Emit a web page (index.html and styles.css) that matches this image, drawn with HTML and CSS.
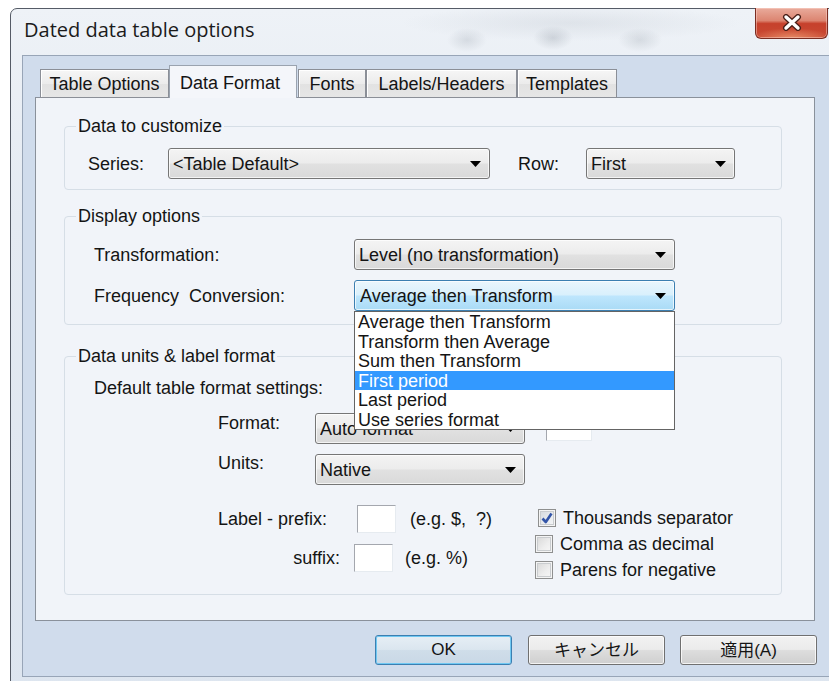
FILE: index.html
```html
<!DOCTYPE html>
<html lang="en">
<head>
<meta charset="utf-8">
<title>Dated data table options</title>
<link rel="stylesheet" href="styles.css">
</head>
<body>
<div class="window">
  <div class="titlebar">
    <span class="title">Dated data table options</span>
    <button class="close" aria-label="Close">
      <svg width="20" height="17" viewBox="0 0 20 17">
        <path d="M4 3 L16 14 M16 3 L4 14" stroke="#4a2019" stroke-width="6" stroke-linecap="round" fill="none"/>
        <path d="M4 3 L16 14 M16 3 L4 14" stroke="#ffffff" stroke-width="3.4" stroke-linecap="round" fill="none"/>
      </svg>
    </button>
  </div>

  <div class="client">
    <div class="tabs">
      <div class="tab tab-options">Table Options</div>
      <div class="tab tab-format active">Data Format</div>
      <div class="tab tab-fonts">Fonts</div>
      <div class="tab tab-labels">Labels/Headers</div>
      <div class="tab tab-templates">Templates</div>
    </div>

    <div class="panel">
      <fieldset class="group group-data">
        <legend>Data to customize</legend>
        <div class="line">
          <span class="lbl lbl-series">Series:</span>
          <div class="select sel-series"><span class="val">&lt;Table Default&gt;</span><svg class="arrow" width="11" height="6" viewBox="0 0 11 6"><path d="M0 0 H11 L5.5 6 Z"/></svg></div>
          <span class="lbl lbl-row">Row:</span>
          <div class="select sel-row"><span class="val">First</span><svg class="arrow" width="11" height="6" viewBox="0 0 11 6"><path d="M0 0 H11 L5.5 6 Z"/></svg></div>
        </div>
      </fieldset>

      <fieldset class="group group-display">
        <legend>Display options</legend>
        <div class="line">
          <span class="lbl lbl-wide">Transformation:</span>
          <div class="select sel-wide"><span class="val">Level (no transformation)</span><svg class="arrow" width="11" height="6" viewBox="0 0 11 6"><path d="M0 0 H11 L5.5 6 Z"/></svg></div>
        </div>
        <div class="line line-gap">
          <span class="lbl lbl-wide">Frequency&nbsp; Conversion:</span>
          <div class="combo">
            <div class="select sel-wide focused"><span class="val">Average then Transform</span><svg class="arrow" width="11" height="6" viewBox="0 0 11 6"><path d="M0 0 H11 L5.5 6 Z"/></svg></div>
            <ul class="list">
              <li>Average then Transform</li>
              <li>Transform then Average</li>
              <li>Sum then Transform</li>
              <li class="hl">First period</li>
              <li>Last period</li>
              <li>Use series format</li>
            </ul>
          </div>
        </div>
      </fieldset>

      <fieldset class="group group-units">
        <legend>Data units &amp; label format</legend>
        <div class="heading">Default table format settings:</div>
        <div class="line line-format">
          <span class="lbl lbl-fmt">Format:</span>
          <div class="select sel-fmt"><span class="val">Auto format</span><svg class="arrow" width="11" height="6" viewBox="0 0 11 6"><path d="M0 0 H11 L5.5 6 Z"/></svg></div>
          <div class="textbox tb-decimals"></div>
        </div>
        <div class="line line-gap line-units">
          <span class="lbl lbl-fmt">Units:</span>
          <div class="select sel-fmt"><span class="val">Native</span><svg class="arrow" width="11" height="6" viewBox="0 0 11 6"><path d="M0 0 H11 L5.5 6 Z"/></svg></div>
        </div>

        <div class="lower">
          <div class="affixes">
            <div class="affix">
              <span class="lbl lbl-prefix">Label - prefix:</span>
              <div class="textbox tb-prefix"></div>
              <span class="hint hint-prefix">(e.g. $,&nbsp; ?)</span>
            </div>
            <div class="affix affix-suffix">
              <span class="lbl lbl-suffix">suffix:</span>
              <div class="textbox tb-suffix"></div>
              <span class="hint hint-suffix">(e.g. %)</span>
            </div>
          </div>
          <div class="checks">
            <div class="check check-first">
              <span class="cb checked"><svg width="14" height="14" viewBox="0 0 14 14"><path d="M2.5 7.5 L5.8 11 L11.5 2.5" stroke="#3355a8" stroke-width="2.6" fill="none" stroke-linejoin="round"/></svg></span>
              <span class="ctext">Thousands separator</span>
            </div>
            <div class="check">
              <span class="cb"></span>
              <span class="ctext">Comma as decimal</span>
            </div>
            <div class="check">
              <span class="cb"></span>
              <span class="ctext">Parens for negative</span>
            </div>
          </div>
        </div>
      </fieldset>
    </div>

    <div class="buttons">
      <button class="btn default">OK</button>
      <button class="btn cjk">キャンセル</button>
      <button class="btn cjk">適用(A)</button>
    </div>
  </div>
</div>
</body>
</html>
```

FILE: styles.css
```css
* {
  box-sizing: border-box;
}

html,
body {
  margin: 0;
  padding: 0;
}

body {
  width: 829px;
  height: 681px;
  overflow: hidden;
  background: #ffffff;
  font-family: "Liberation Sans", Arial, "Noto Sans CJK JP", sans-serif;
  font-size: 18px;
  line-height: 20px;
  color: #141414;
}

/* ---------- window frame ---------- */
.window {
  margin: 8px 0 0 10px;
  width: 840px;
  height: 700px;
  padding: 0 11px;
  border: 1px solid #555b66;
  border-radius: 7px 7px 0 0;
  background:
    radial-gradient(ellipse 20px 12px at 456px 31px, rgba(130, 140, 152, 0.22), transparent),
    radial-gradient(ellipse 20px 12px at 542px 29px, rgba(120, 130, 142, 0.26), transparent),
    radial-gradient(ellipse 22px 12px at 629px 31px, rgba(130, 140, 150, 0.22), transparent),
    radial-gradient(ellipse 170px 18px at 560px 14px, rgba(170, 178, 188, 0.22), transparent),
    linear-gradient(180deg, #eef2f7 0%, #e4eaf2 30%, #dde5ef 100%);
  display: flex;
  flex-direction: column;
}

.titlebar {
  height: 46px;
  display: flex;
  align-items: flex-start;
}

.title {
  margin: 7px 0 0 2px;
  font-family: "Open Sans", "Liberation Sans", sans-serif;
  font-size: 20px;
  line-height: 28px;
  color: #1b1b1b;
}

.close {
  margin: -1px 10px 0 auto;
  width: 73px;
  height: 31px;
  padding: 0;
  border: 1px solid #7a2d22;
  border-top: none;
  border-radius: 0 0 6px 6px;
  background:
    radial-gradient(ellipse 40px 10px at 50% 100%, rgba(255, 190, 140, 0.55), transparent),
    linear-gradient(180deg, #e9ab9c 0%, #dc8571 42%, #c6412c 52%, #c94a33 100%);
  box-shadow: inset 0 0 0 1px rgba(255, 220, 210, 0.45);
  display: flex;
  align-items: center;
  justify-content: center;
}

.close svg {
  margin-top: -1px;
}

/* ---------- client area ---------- */
.client {
  border: 1px solid #98a5b7;
  background: #d0dcec;
  padding: 9px 0 11px 12px;
}

.tabs {
  display: flex;
  align-items: flex-end;
  height: 33px;
  padding-left: 5px;
  margin-bottom: -1px;
  position: relative;
  z-index: 1;
}

.tab {
  height: 29px;
  border: 1px solid #8b8f97;
  background: linear-gradient(180deg, #f6f6f6 0%, #ececec 50%, #e2e2e2 51%, #e6e6e6 100%);
  box-shadow: inset 1px 1px 0 #ffffff;
  display: flex;
  align-items: center;
  justify-content: center;
  white-space: nowrap;
}

.tab-options { width: 129px; }
.tab-format { width: 128px; }
.tab-fonts { width: 68px; margin-left: 1px; }
.tab-labels { width: 151px; }
.tab-templates { width: 100px; }

.tab.active {
  height: 33px;
  border-color: #9aa3af;
  border-bottom: none;
  background: #f4f6fa;
  box-shadow: none;
  justify-content: flex-start;
  padding-left: 10px;
  padding-top: 1px;
}

.panel {
  width: 780px;
  border: 1px solid #8a919b;
  background: #f1f4f9;
  padding: 18px 32px 25px 28px;
}

/* ---------- group boxes ---------- */
.group {
  margin: 0;
  min-width: 0;
  padding: 0;
  border: 1px solid #d6dee6;
  border-radius: 4px;
}

.group legend {
  padding: 0 2px;
  line-height: 20px;
}

.group-data {
  padding: 12px 0 10px 23px;
}

.group-data legend {
  margin-left: -12px;
}

.group-display {
  margin-top: 16px;
  padding: 13px 0 13px 29px;
}

.group-units {
  margin-top: 21px;
  padding: 12px 0 11px 29px;
}

.group-display legend,
.group-units legend {
  margin-left: -18px;
}

.line {
  display: flex;
  align-items: center;
}

.line-gap {
  margin-top: 10px;
}

.lbl {
  white-space: nowrap;
}

.lbl-series { width: 80px; }
.lbl-row { width: 68px; margin-left: 28px; }
.lbl-wide { width: 260px; }

/* ---------- drop-down boxes ---------- */
.select {
  height: 31px;
  display: flex;
  align-items: center;
  padding: 0 8px 0 4px;
  border: 1px solid #767676;
  border-radius: 3px;
  background: linear-gradient(180deg, #f4f4f4 0%, #ececec 48%, #e1e1e1 52%, #d9d9d9 100%);
  box-shadow: inset 0 0 0 1px rgba(255, 255, 255, 0.7);
  white-space: nowrap;
}

.select .val {
  flex: 1;
  overflow: hidden;
}

.select .arrow {
  flex: none;
  fill: #000000;
}

.sel-series { width: 322px; }
.sel-row { width: 149px; }
.sel-wide { width: 321px; }
.sel-fmt { width: 210px; }

.select.focused {
  border-color: #3c7fb1;
  background: linear-gradient(180deg, #eaf6fd 0%, #d9f0fc 48%, #bee6fd 52%, #a9dbf6 100%);
  padding-left: 5px;
}

.combo {
  position: relative;
}

.list {
  position: absolute;
  z-index: 10;
  top: 31px;
  left: 0;
  width: 321px;
  margin: 0;
  padding: 0;
  list-style: none;
  border: 1px solid #646464;
  background: #ffffff;
}

.list li {
  height: 19.5px;
  line-height: 19.5px;
  padding-left: 3px;
  padding-top: 1px;
  white-space: nowrap;
}

.list li.hl {
  background: #3399ff;
  color: #ffffff;
}

/* ---------- units section ---------- */
.heading {
  line-height: 20px;
}

.line-format {
  margin-top: 15px;
  margin-left: 124px;
  align-items: flex-start;
}

.line-units {
  margin-left: 124px;
  align-items: flex-start;
}

.lbl-fmt {
  width: 97px;
  line-height: 20px;
}

.line-units .lbl-fmt {
  margin-top: -1px;
}

.textbox {
  height: 28px;
  background: #ffffff;
  border: 1px solid;
  border-color: #a4a7ae #e6ebf0 #e6ebf0 #a4a7ae;
}

.tb-decimals {
  width: 46px;
  margin-left: 21px;
}

.lower {
  margin-top: 20px;
  display: flex;
}

.affixes {
  width: 317px;
  margin-left: 124px;
}

.affix {
  display: flex;
  align-items: center;
}

.affix-suffix {
  margin-top: 11px;
}

.lbl-prefix { width: 127px; margin-right: 12px; }
.lbl-suffix { width: 122px; margin-right: 14px; text-align: right; }

.tb-prefix,
.tb-suffix {
  width: 39px;
}

.hint {
  white-space: nowrap;
}

.hint-prefix { margin-left: 14px; }
.hint-suffix { margin-left: 12px; }

.checks {
  display: flex;
  flex-direction: column;
}

.check {
  height: 26px;
  display: flex;
  align-items: center;
  gap: 7px;
}

.check-first {
  padding-left: 3px;
}

.cb {
  width: 18px;
  height: 18px;
  flex: none;
  border: 1px solid #8e8f8f;
  background: linear-gradient(135deg, #d6d6d6 0%, #eeeeee 60%, #f8f8f8 100%);
  box-shadow: inset 0 0 0 1px #f4f4f4, inset 0 0 0 2px #c9cccf;
  display: flex;
  align-items: center;
  justify-content: center;
}

.cb.checked {
  background: linear-gradient(135deg, #d3d7dc 0%, #e9ecef 60%, #f6f7f8 100%);
}

.ctext {
  white-space: nowrap;
}

/* ---------- dialog buttons ---------- */
.buttons {
  margin-top: 14px;
  padding-left: 340px;
  display: flex;
  gap: 16px;
}

.btn {
  width: 137px;
  height: 30px;
  padding: 0;
  border: 1px solid #707070;
  border-radius: 3px;
  background: linear-gradient(180deg, #f2f2f2 0%, #ebebeb 48%, #dddddd 52%, #cfcfcf 100%);
  box-shadow: inset 0 0 0 1px rgba(255, 255, 255, 0.75);
  font-family: "Liberation Sans", Arial, "Noto Sans CJK JP", sans-serif;
  font-size: 17px;
  color: #141414;
}

.btn.cjk {
  padding-bottom: 4px;
}

.btn + .btn + .btn {
  margin-left: -1px;
}

.btn.default {
  border-color: #3c7fb1;
  background: linear-gradient(180deg, #e6eef5 0%, #dbe6ef 48%, #cfdde9 52%, #c9d8e6 100%);
  box-shadow: inset 0 0 0 1px #6fc8f2;
}
```
